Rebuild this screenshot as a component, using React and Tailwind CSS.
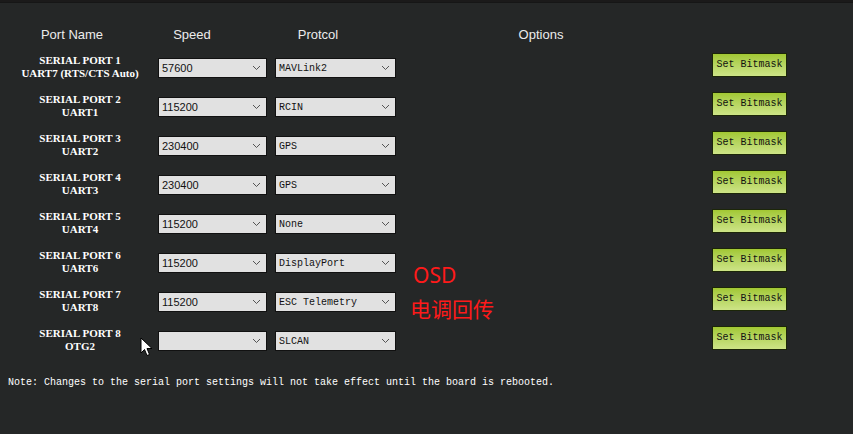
import React from "react";

const rows = [
  { a: "SERIAL PORT 1", b: "UART7 (RTS/CTS Auto)", speed: "57600", proto: "MAVLink2" },
  { a: "SERIAL PORT 2", b: "UART1", speed: "115200", proto: "RCIN" },
  { a: "SERIAL PORT 3", b: "UART2", speed: "230400", proto: "GPS" },
  { a: "SERIAL PORT 4", b: "UART3", speed: "230400", proto: "GPS" },
  { a: "SERIAL PORT 5", b: "UART4", speed: "115200", proto: "None" },
  { a: "SERIAL PORT 6", b: "UART6", speed: "115200", proto: "DisplayPort" },
  { a: "SERIAL PORT 7", b: "UART8", speed: "115200", proto: "ESC Telemetry" },
  { a: "SERIAL PORT 8", b: "OTG2", speed: "", proto: "SLCAN" },
];

function Chevron() {
  return (
    <svg width="9" height="6" viewBox="0 0 9 6" className="shrink-0">
      <path d="M1 1 L4.5 4.5 L8 1" fill="none" stroke="#444" strokeWidth="0.9" />
    </svg>
  );
}

function Select({ value, width, mono }) {
  return (
    <div
      className={`flex items-center h-[20px] border border-[#111] bg-[#e1e1e1] pl-[3px] pr-[5px] ${width}`}
    >
      <span
        className={`flex-1 text-[#111] leading-none pt-[1px] ${
          mono ? "font-['Liberation_Mono',monospace] text-[10px]" : "font-['Liberation_Sans',sans-serif] text-[11px]"
        }`}
      >
        {value}
      </span>
      <Chevron />
    </div>
  );
}

export default function App() {
  return (
    <div className="relative w-[853px] h-[434px] overflow-hidden bg-[#252727]">
      <div className="h-[3px] bg-[#1b1a1a] border-b border-[#161616]" />
      <div className="flex items-center h-[16px] mt-[24px] font-['Liberation_Sans',sans-serif] text-[13px] text-[#ececec]">
        <div className="w-[144px] text-center">Port Name</div>
        <div className="w-[96px] text-center">Speed</div>
        <div className="w-[156px] text-center">Protcol</div>
        <div className="w-[290px] text-center">Options</div>
      </div>
      <div className="mt-[5px] flex flex-col">
        {rows.map((r, i) => (
          <div key={i} className="flex items-start h-[39px]">
            <div className="w-[160px] mt-[6px] text-center font-['Liberation_Serif',serif] font-bold text-[11px] leading-[13px] text-white">
              <div>{r.a}</div>
              <div>{r.b}</div>
            </div>
            <div className="flex -ml-[2px] mt-[10px]">
              <Select value={r.speed} width="w-[109px]" />
            </div>
            <div className="flex mt-[10px] ml-[8px]">
              <Select value={r.proto} width="w-[121px]" mono />
            </div>
            <div className="flex ml-[316px] mt-[5px]">
              <button className="flex items-center justify-center w-[75px] h-[24px] border border-[#1c2608] bg-gradient-to-b from-[#a2c832] to-[#cde486] font-['Liberation_Mono',monospace] text-[10px] text-[#111] leading-none">
                Set Bitmask
              </button>
            </div>
          </div>
        ))}
      </div>
      <div className="mt-[17px] pl-[8px] font-['Liberation_Mono',monospace] text-[10px] leading-[12px] text-white">
        Note: Changes to the serial port settings will not take effect until the board is rebooted.
      </div>

      <div className="absolute left-[413px] top-[262px] font-['Noto_Sans','Noto_Sans_CJK_SC',sans-serif] text-[21px] leading-[26px] text-[#ff1a1a]">
        OSD
      </div>
      <div className="absolute left-[410px] top-[295px] font-['Noto_Sans_CJK_SC',sans-serif] text-[21px] leading-[26px] text-[#ff1a1a]">
        电调回传
      </div>
      <svg className="absolute left-[140px] top-[337px]" width="14" height="21" viewBox="0 0 14 21">
        <path d="M1 1 L1 16 L4.5 12.5 L7 18.5 L9.5 17.5 L7 11.5 L12 11.5 Z" fill="#fff" stroke="#000" strokeWidth="1" strokeLinejoin="round" />
      </svg>
    </div>
  );
}
